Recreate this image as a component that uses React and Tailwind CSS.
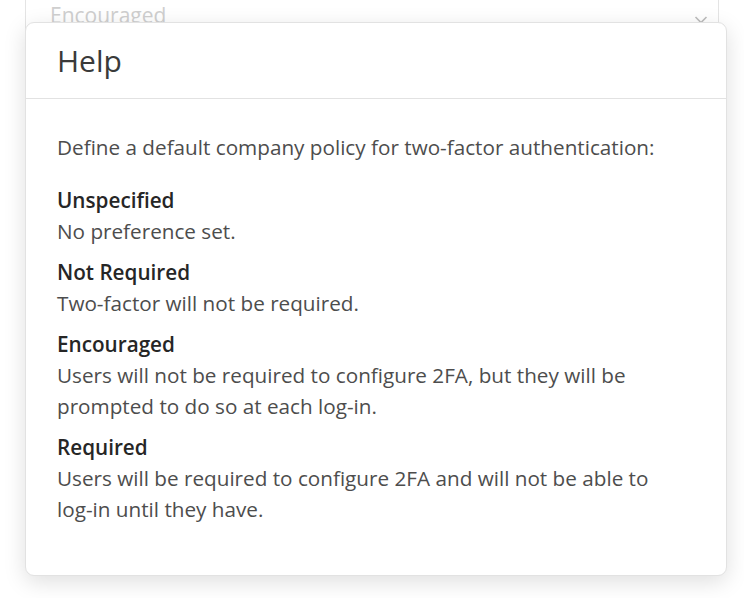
import React from "react";

const items = [
  { title: "Unspecified", body: "No preference set." },
  { title: "Not Required", body: "Two-factor will not be required." },
  {
    title: "Encouraged",
    body: "Users will not be required to configure 2FA, but they will be prompted to do so at each log-in.",
  },
  {
    title: "Required",
    body: "Users will be required to configure 2FA and will not be able to log-in until they have.",
  },
];

export default function App() {
  return (
    <div
      className="relative w-[744px] h-[598px] overflow-hidden bg-white"
      style={{ fontFamily: '"Open Sans", "Noto Sans", sans-serif' }}
    >
      {/* select behind the popover */}
      <div className="mx-[25px] -mt-[20px] h-[60px] border border-[#e4e4e4] rounded-md flex items-center justify-between pl-[24px] pr-[10px]">
        <span className="text-[21px] text-[#cfcfcf] pt-[12px]">Encouraged</span>
        <svg width="14" height="10" viewBox="0 0 14 10" className="mt-[20px]">
          <path d="M1.5 2 L7 7.5 L12.5 2" fill="none" stroke="#bdbdbd" strokeWidth="1.6" />
        </svg>
      </div>

      {/* help popover */}
      <div className="absolute left-[25px] top-[22px] w-[702px] h-[554px] bg-white border border-[#e2e2e2] rounded-[9px] shadow-[0_6px_22px_rgba(0,0,0,0.13)]">
        <div className="h-[76px] border-b border-[#e2e2e2] flex items-center px-[31px]">
          <h2 className="text-[30px] text-[#3a3a3a] font-normal">Help</h2>
        </div>
        <div className="px-[31px] pt-[33px] text-[20.7px] leading-[31px] text-[#4d4d4d]">
          <p className="mb-[22px] whitespace-nowrap">Define a default company policy for two-factor authentication:</p>
          {items.map((it) => (
            <div key={it.title} className="mb-[10px] max-w-[620px]">
              <div className="font-semibold text-[#262626]">{it.title}</div>
              <div>{it.body}</div>
            </div>
          ))}
        </div>
      </div>
    </div>
  );
}
